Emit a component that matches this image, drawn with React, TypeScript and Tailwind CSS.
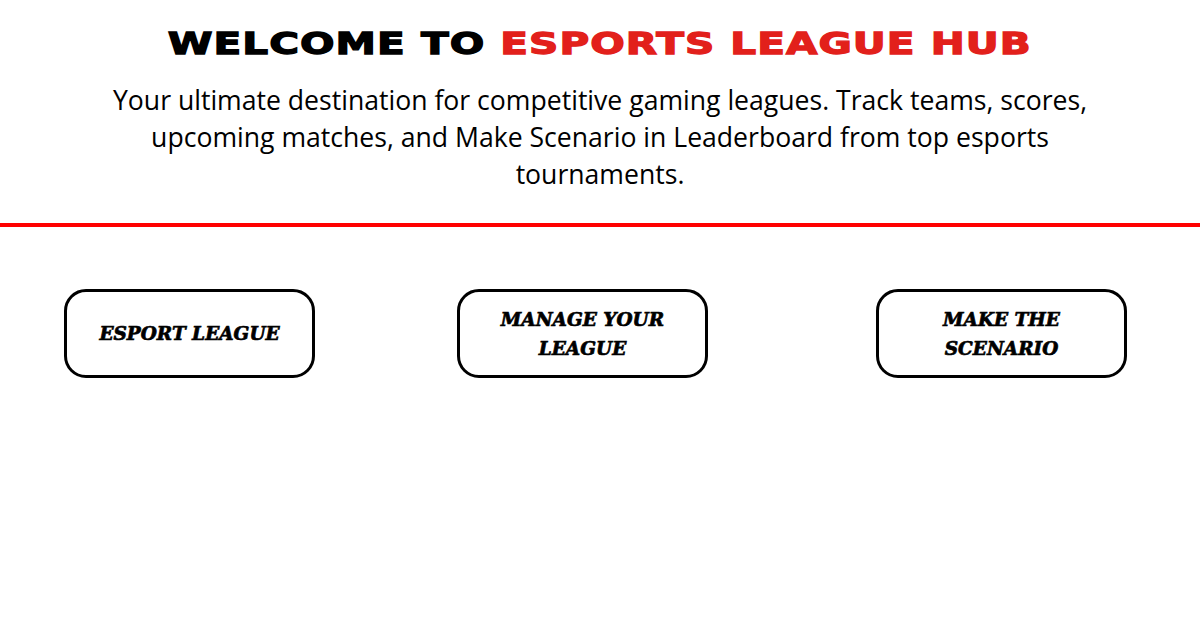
export default function App() {
  const cards = [
    { label: "ESPORT LEAGUE", ml: "ml-[64px]" },
    { label: "MANAGE YOUR LEAGUE", ml: "ml-[142px]" },
    { label: "MAKE THE SCENARIO", ml: "ml-[168px]" },
  ];
  return (
    <div className="w-[1200px] h-[630px] bg-white overflow-hidden">
      <div className="flex flex-col items-center pt-[24px] h-[223px]">
        <h1
          className="text-[31px] leading-[38px] font-bold tracking-[0.025em] text-black scale-x-[1.31] [-webkit-text-stroke:1.3px_currentColor] whitespace-nowrap"
          style={{ fontFamily: '"DejaVu Sans", sans-serif' }}
        >
          WELCOME TO <span className="text-[#e2201b]">ESPORTS LEAGUE HUB</span>
        </h1>
        <p
          className="mt-[20px] max-w-[1000px] text-center text-[26.6px] leading-[37px] text-black"
          style={{ fontFamily: '"Open Sans", sans-serif' }}
        >
          Your ultimate destination for competitive gaming leagues. Track teams, scores,
          upcoming matches, and Make Scenario in Leaderboard from top esports tournaments.
        </p>
      </div>
      <div className="h-[4px] bg-[#ff0000]" />
      <div className="flex mt-[62px]">
        {cards.map((c) => (
          <div
            key={c.label}
            className={`${c.ml} w-[251px] h-[89px] border-[3px] border-black rounded-[22px] flex items-center justify-center px-[30px]`}
          >
            <span
              className="text-center text-[18.5px] leading-[29px] font-bold italic text-black [-webkit-text-stroke:0.7px_currentColor]"
              style={{ fontFamily: '"DejaVu Serif", serif' }}
            >
              {c.label}
            </span>
          </div>
        ))}
      </div>
    </div>
  );
}
